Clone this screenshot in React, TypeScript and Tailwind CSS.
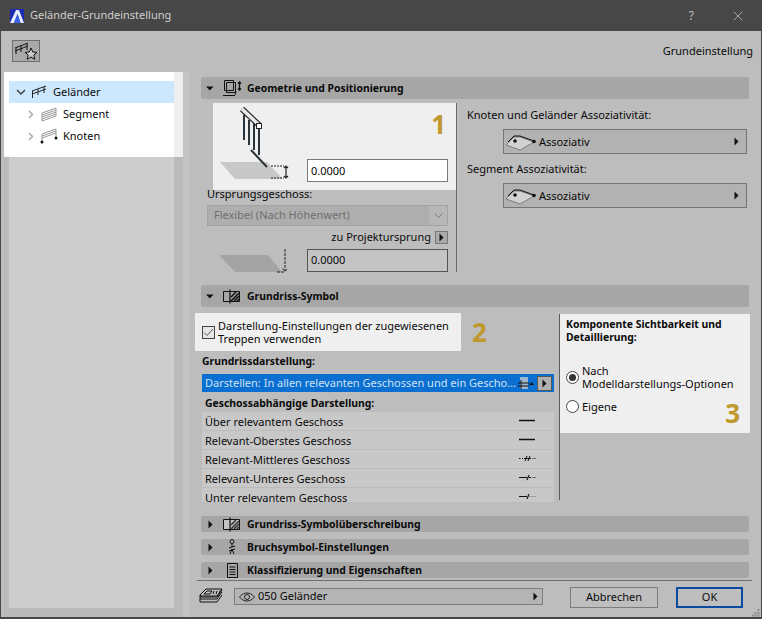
import type { ReactNode } from 'react'
import { X } from 'lucide-react'

const listRows = [
  { label: 'Über relevantem Geschoss', line: 'solid' },
  { label: 'Relevant-Oberstes Geschoss', line: 'solid' },
  { label: 'Relevant-Mittleres Geschoss', line: 'mid' },
  { label: 'Relevant-Unteres Geschoss', line: 'low' },
  { label: 'Unter relevantem Geschoss', line: 'under' },
]

function Caret({ open }: { open?: boolean }) {
  return open ? (
    <svg width="8" height="5" viewBox="0 0 8 5"><path d="M0 .5h7.500L3.750 4.500z" fill="#111" /></svg>
  ) : (
    <svg width="5" height="9" viewBox="0 0 5 9"><path d="M.5.5v8l4-4z" fill="#111" /></svg>
  )
}

function SectionHeader({ open, title, icon, tall }: { open?: boolean; title: string; icon: ReactNode; tall?: boolean }) {
  return (
    <div className={`flex items-center rounded-[3px] bg-[#a6a6a6] pl-[4px] ${tall ? 'h-[22px]' : 'h-[16px]'}`}>
      <div className="flex w-[10px] justify-center"><Caret open={open} /></div>
      <div className="ml-[2px] flex w-[30px] justify-center">{icon}</div>
      <span className="pt-[2px] text-[10.4px] font-bold text-[#0a0a0a]">{title}</span>
    </div>
  )
}

function HatchIcon({ open }: { open?: boolean }) {
  return (
    <svg width="18" height="15" viewBox="0 0 18 15" fill="none" stroke="#111">
      <path d="M.5 2.500h16v10H.5z" fill={open ? 'none' : '#c4c4c4'} />
      <path d="M7 .5v14" strokeWidth="1.300" />
      <path d="M8 12 16 4M11 12l5-5M8 8l5-5M14 12l2-2" strokeWidth="1.600" stroke={open ? '#111' : '#333'} />
    </svg>
  )
}

function AssocSelect() {
  return (
    <div className="ml-[36px] flex h-[25px] w-[244px] items-center border border-[#757575] bg-[#b2b2b2] pr-[7px] text-[11px] text-[#0a0a0a]">
      <svg className="ml-px" width="32" height="18" viewBox="0 0 32 18" fill="none">
        <path d="M1 12 9 4h6l14 5-14 8z" fill="#d2d2d2" stroke="#7d7d7d" />
        <path d="M3 9 9 3h6l14 5" stroke="#111" />
        <circle cx="10" cy="8" r="1.800" fill="#111" />
        <circle cx="29" cy="8.500" r="1.800" fill="#111" />
      </svg>
      <span className="ml-[2px] flex-1 pt-[2px]">Assoziativ</span>
      <Caret />
    </div>
  )
}

function LineSample({ kind }: { kind: string }) {
  const stroke = '#111'
  return (
    <svg width="17" height="7" viewBox="0 0 17 7" fill="none">
      {kind === 'solid' && <path d="M0 3.500h16" stroke={stroke} strokeWidth="1.500" />}
      {kind === 'mid' && <path d="M0 3.500h1.500M3 3.500h1M5 3.500h7M13.500 3.500h1M15.500 3.500h1M6 6l2-5M9 6l2-5" stroke={stroke} />}
      {kind === 'low' && <path d="M0 3.500h8M10 3.500h2M13.500 3.500h1M15.500 3.500h1M8 6l2-5" stroke={stroke} strokeWidth="1.100" />}
      {kind === 'under' && (
        <>
          <path d="M0 3.500h8M8 6l2-5" stroke={stroke} strokeWidth="1.100" />
          <path d="M10 3.500h7" stroke="#9a9a9a" />
        </>
      )}
    </svg>
  )
}

export default function App() {
  return (
    <div className="flex h-[619px] w-[762px] flex-col overflow-hidden bg-[#474747] font-['Noto_Sans','Open_Sans',sans-serif]">
      {/* title bar */}
      <div className="flex h-[31px] shrink-0 items-center text-[#cfcfcf]">
        <svg className="ml-[10px]" width="14" height="14" viewBox="0 0 14 14">
          <rect width="14" height="14" fill="#1a2bb0" />
          <path d="M0 14 6 1h3l5 13H10.500L7.500 5 4 14z" fill="#e4ecff" />
          <path d="M4 14 7.500 5l3 9z" fill="#3a62e6" />
        </svg>
        <span className="ml-[6px] text-[11px]">Geländer-Grundeinstellung</span>
        <span className="ml-auto mr-[36px] text-[12px] text-[#bdbdbd]">?</span>
        <X className="mr-[16px]" size={16} strokeWidth={1} color="#d8d8d8" />
      </div>

      <div className="relative mx-px mb-[2px] flex flex-1 flex-col bg-[#bdbdbd]">
        {/* toolbar */}
        <div className="flex h-[41px] shrink-0 items-start justify-between pl-[11px] pr-[8px] pt-[9px]">
          <div className="flex h-[22px] w-[28px] items-center justify-center border border-[#6e6e6e] bg-[#a9a9a9]">
            <svg width="24" height="20" viewBox="0 0 24 20" fill="none" stroke="#111">
              <path d="M1 7 14 2M1 10 14 5M2 7v6M7 5v6M13 3v6" />
              <path d="m17 7 1.800 4 4.200.4-3.200 2.700 1 4.200-3.800-2.300-3.800 2.300 1-4.200-3.200-2.700 4.200-.4z" fill="#c9c9c9" />
            </svg>
          </div>
          <span className="text-[11px] leading-[22px] text-[#0a0a0a]">Grundeinstellung</span>
        </div>

        <div className="flex min-h-0 flex-1">
          {/* tree */}
          <div className="ml-[3px] flex w-[179px] shrink-0 flex-col bg-[#bababa]">
            <div className="h-[85px] bg-[#efefef] pr-[9px]">
              <div className="h-[85px] bg-white pt-[9px] text-[11px] text-[#0a0a0a]">
                <div className="ml-[5px] flex h-[22px] items-center bg-[#cce8ff] pl-[7px]">
                  <svg width="10" height="7" viewBox="0 0 10 7" fill="none" stroke="#444" strokeWidth="1.500"><path d="m1 1 4 4 4-4" /></svg>
                  <svg className="ml-[5px]" width="16" height="14" viewBox="0 0 16 14" fill="none" stroke="#222">
                    <path d="M1 6 15 1M1 9l14-5M1.500 6v7M7 4v6M13 2v6" />
                  </svg>
                  <span className="ml-[6px]">Geländer</span>
                </div>
                <div className="flex h-[22px] items-center pl-[24px]">
                  <svg width="6" height="9" viewBox="0 0 6 9" fill="none" stroke="#aaa" strokeWidth="1.500"><path d="m1 1 3.500 3.500L1 8" /></svg>
                  <svg className="ml-[7px]" width="16" height="15" viewBox="0 0 16 15" fill="none" stroke="#999">
                    <path d="M1 6 15 1v8L1 14zM1 8l14-5M1 10l14-5M1 12l14-5" />
                  </svg>
                  <span className="ml-[6px]">Segment</span>
                </div>
                <div className="flex h-[22px] items-center pl-[24px]">
                  <svg width="6" height="9" viewBox="0 0 6 9" fill="none" stroke="#aaa" strokeWidth="1.500"><path d="m1 1 3.500 3.500L1 8" /></svg>
                  <svg className="ml-[6px]" width="18" height="16" viewBox="0 0 18 16" fill="none" stroke="#999">
                    <path d="M2 6 16 1M2 8l14-5M2 10l14-5M2 6v8M16 1v9" />
                    <circle cx="2" cy="14" r="1.500" fill="#111" stroke="none" />
                    <circle cx="16" cy="10" r="1.500" fill="#111" stroke="none" />
                  </svg>
                  <span className="ml-[5px]">Knoten</span>
                </div>
              </div>
            </div>
            <div className="mb-[9px] ml-[5px] w-[165px] flex-1 bg-[#cdcdcd]" />
          </div>
          <div className="w-[6px] shrink-0 bg-[#c3c3c3]" />

          {/* settings column */}
          <div className="ml-[12px] flex w-[551px] flex-col">
            <div className="mt-[5px] w-[548px]">
              <SectionHeader
                open
                tall
                title="Geometrie und Positionierung"
                icon={
                  <svg width="20" height="18" viewBox="0 0 20 18" fill="none" stroke="#111">
                    <path d="M2.500 1.500h9v10h-9zM4.500 3.500h9v10h-9zM1 16.500h12M14 12l-1 4" />
                    <path d="M17.500 3v8M16 4.500 17.500 3 19 4.500M16 9.500l1.500 1.500L19 9.500" strokeWidth="1.300" />
                  </svg>
                }
              />
            </div>

            {/* geometrie */}
            <div className="flex h-[172px]">
              <div className="ml-[12px] mt-[4px] flex h-[169px] w-[244px] flex-col border-r border-[#6a6a6a]">
                <div className="relative flex h-[87px] w-[243px] shrink-0 bg-[#efefef]">
                  <svg className="shrink-0" width="94" height="87" viewBox="0 0 94 87" fill="none">
                    <path d="M7 59h47l16 17H22z" fill="#c8c8c8" />
                    <path d="M29 6l17 16" stroke="#333" strokeWidth="6" />
                    <path d="M29 6l17 16" stroke="#ececec" strokeWidth="3.500" />
                    <path d="M31 12v25M36 17v25M41 20v27M46 25v27M38 47l16 17" stroke="#29343a" strokeWidth="2" />
                    <rect x="43.500" y="20.500" width="5" height="5" fill="#fff" stroke="#222" />
                    <path d="M58 63h13M58 75h13" stroke="#222" strokeDasharray="2 1" />
                    <path d="M73 63v12M71 65l2-2 2 2M71 73l2 2 2-2" stroke="#222" strokeWidth="1.200" />
                  </svg>
                  <div className="mt-[56px] flex h-[23px] w-[141px] items-center border border-[#7a7a7a] bg-white pl-[3px] pt-px text-[11px] text-[#0a0a0a]">0.0000</div>
                  <span className="absolute right-[10px] top-[4px] font-['Open_Sans',sans-serif] text-[26px] leading-[34px] font-bold text-[#c0982c]">1</span>
                </div>
                <div className="-mt-[4px] -ml-[6px] text-[11px] leading-[15px] text-[#0a0a0a]">Ursprungsgeschoss:</div>
                <div className="mt-[4px] -ml-[6px] flex h-[21px] w-[241px] shrink-0 items-center border border-[#a3a3a3] bg-[#aeaeae] pl-[6px] text-[11px] text-[#6f6f6f]">
                  <span className="flex-1">Flexibel (Nach Höhenwert)</span>
                  <div className="flex h-full w-[18px] items-center justify-center bg-[#b7b7b7]">
                    <svg width="9" height="5" viewBox="0 0 9 5" fill="none" stroke="#777"><path d="m.5.500 4 4 4-4" /></svg>
                  </div>
                </div>
                <div className="mt-[2px] flex h-[18px] shrink-0 items-center justify-end pr-[8px] text-[11px] text-[#0a0a0a]">
                  <span>zu Projektursprung</span>
                  <div className="ml-[4px] flex h-[13px] w-[13px] items-center justify-center border border-[#777] bg-[#a9a9a9]"><Caret /></div>
                </div>
                <div className="mt-[3px] flex items-start">
                  <svg className="shrink-0" width="94" height="24" viewBox="0 0 94 24" fill="none">
                    <path d="M6 6h49l14 17H22z" fill="#a4a4a4" />
                    <path d="M72 0v22M69.500 19.500l2.500 3 2.500-3M64 23h7" stroke="#222" strokeDasharray="3 1" />
                  </svg>
                  <div className="flex h-[23px] w-[141px] items-center border border-[#555] bg-[#c4c4c4] pl-[3px] text-[11px] text-[#0a0a0a]">0.0000</div>
                </div>
              </div>
              <div className="ml-[10px] pt-[8px] text-[11px] text-[#0a0a0a]">
                <div className="h-[22px] leading-[15px]">Knoten und Geländer Assoziativität:</div>
                <AssocSelect />
                <div className="mt-[7px] h-[22px] leading-[15px]">Segment Assoziativität:</div>
                <AssocSelect />
              </div>
            </div>

            {/* grundriss */}
            <div className="mt-[14px] w-[548px]">
              <SectionHeader open tall title="Grundriss-Symbol" icon={<HatchIcon open />} />
            </div>
            <div className="flex h-[209px] text-[11px] text-[#0a0a0a]">
              <div className="w-[358px]">
                <div className="flex items-start">
                  <div className="-ml-[6px] mt-[6px] flex h-[38px] w-[266px] items-center bg-[#efefef] pl-[7px]">
                    <div className="flex h-[13px] w-[13px] shrink-0 items-center justify-center border border-[#444] bg-[#e6e6e6]">
                      <svg width="11" height="9" viewBox="0 0 11 9" fill="none" stroke="#555"><path d="m1 4.500 3 3L10 1" /></svg>
                    </div>
                    <span className="ml-[3px] leading-[13px]">Darstellung-Einstellungen der zugewiesenen Treppen verwenden</span>
                  </div>
                  <span className="ml-[11px] mt-[8px] font-['Open_Sans',sans-serif] text-[26px] leading-[34px] font-bold text-[#c0982c]">2</span>
                </div>
                <div className="ml-[1px] mt-[3px] h-[15px] text-[10.4px] font-bold leading-[15px]">Grundrissdarstellung:</div>
                <div className="ml-[1px] mt-[5px] flex h-[18px] w-[352px] items-center bg-[#0a6fd0] pl-[3px] pr-[2px] text-[#cfe2f5]">
                  <span className="flex-1 truncate">Darstellen: In allen relevanten Geschossen und ein Gescho...</span>
                  <svg className="ml-[2px]" width="18" height="14" viewBox="0 0 18 14" fill="none">
                    <rect x="2" y="1" width="8" height="12" fill="#9fb6cf" />
                    <path d="M0 7h11M0 10h11M3 4v9" stroke="#111" />
                    <path d="M11 9h5l-2.500-3z" fill="#111" />
                  </svg>
                  <div className="ml-px flex h-[15px] w-[15px] items-center justify-center border border-[#555] bg-[#b0b0b0]"><Caret /></div>
                </div>
                <div className="ml-[4px] mt-[4px] h-[15px] text-[10.4px] font-bold leading-[15px]">Geschossabhängige Darstellung:</div>
                <div className="ml-[1px] mt-[1px] w-[352px]">
                  {listRows.map((row, i) => (
                    <div key={row.label} className={`flex items-start justify-between bg-[#c8c8c8] pl-[3px] pr-[18px] leading-[20px] ${i === 4 ? 'h-[14px]' : 'h-[19px] border-b border-[#bbbbbb]'}`}>
                      <span>{row.label}</span>
                      <div className="pt-[5px]"><LineSample kind={row.line} /></div>
                    </div>
                  ))}
                </div>
              </div>
              <div className="mt-[7px] h-[186px] border-l border-[#5a5a5a]">
                <div className="relative h-[119px] w-[190px] bg-[#efefef] pl-[5px] pt-[4px]">
                  <div className="pl-px text-[10.4px] font-bold leading-[13px]">Komponente Sichtbarkeit und Detaillierung:</div>
                  <div className="mt-[20px] flex items-center pl-px">
                    <div className="flex h-[13px] w-[13px] shrink-0 items-center justify-center rounded-full border border-[#444] bg-white">
                      <div className="h-[7px] w-[7px] rounded-full bg-[#333]" />
                    </div>
                    <span className="ml-[3px] whitespace-pre leading-[13px]">{'Nach\nModelldarstellungs-Optionen'}</span>
                  </div>
                  <div className="mt-[10px] flex items-center pl-px">
                    <div className="h-[13px] w-[13px] rounded-full border border-[#444] bg-white" />
                    <span className="ml-[3px] leading-[13px]">Eigene</span>
                  </div>
                  <span className="absolute bottom-[3px] right-[10px] font-['Open_Sans',sans-serif] text-[26px] leading-[34px] font-bold text-[#c0982c]">3</span>
                </div>
              </div>
            </div>

            {/* collapsed sections */}
            <div className="flex w-[548px] flex-col gap-[7px]">
              <SectionHeader title="Grundriss-Symbolüberschreibung" icon={<HatchIcon />} />
              <SectionHeader
                title="Bruchsymbol-Einstellungen"
                icon={
                  <svg width="10" height="16" viewBox="0 0 10 16" fill="none" stroke="#111">
                    <circle cx="5" cy="2.500" r="2" />
                    <path d="M2 9l6-2M2 12l6-2M5 5v3M3 15l2-5M7 15l-2-5" />
                  </svg>
                }
              />
              <SectionHeader
                title="Klassifizierung und Eigenschaften"
                icon={
                  <svg width="11" height="15" viewBox="0 0 11 15" fill="none" stroke="#111">
                    <path d="M.5.500h10v14H.5zM2.500 4h6M2.500 6.500h6M2.500 9h6M2.500 11.500h6" />
                  </svg>
                }
              />
            </div>

            {/* footer */}
            <div className="-ml-[4px] mt-[2px] h-px w-[555px] bg-[#6f6f6f]" />
            <div className="-ml-[2px] mt-[6px] flex items-start text-[11px] text-[#0a0a0a]">
              <svg className="mt-[1px] shrink-0" width="24" height="15" viewBox="0 0 24 15" fill="none" stroke="#111">
                <path d="M1 7 7 1h16l-5 7H2zM5 6l3-3h5l-2 3zM14 6l1-3M17 6l1-3M20 6l1-3" />
                <path d="M1 7v2h17l5-7M1 9v2h17l5-7M1 11v3h17l5-7" />
              </svg>
              <div className="ml-[11px] mt-[1px] flex h-[17px] w-[309px] items-center border border-[#7c7c7c] bg-[#b4b4b4] pl-[4px] pr-[4px]">
                <svg width="16" height="10" viewBox="0 0 16 10" fill="none" stroke="#222">
                  <path d="M.5 5C3 2 5.500 1 8 1s5 1 7.500 4C13 8 10.500 9 8 9S3 8 .5 5z" />
                  <circle cx="8" cy="5" r="2.500" />
                </svg>
                <span className="ml-[3px] flex-1">050 Geländer</span>
                <Caret />
              </div>
              <div className="ml-[27px] flex h-[21px] w-[88px] items-center justify-center border border-[#7c7c7c] bg-[#bebebe]">Abbrechen</div>
              <div className="ml-[18px] flex h-[21px] w-[67px] items-center justify-center border-2 border-[#0a4ba0] bg-[#bebebe]">OK</div>
            </div>
          </div>
        </div>

        {/* resize grip */}
        <svg className="absolute bottom-0 right-[1px]" width="8" height="8" viewBox="0 0 8 8" fill="#8a8a8a">
          <path d="M5.500 0h2v2h-2zM2.500 3h2v2h-2zM5.500 3h2v2h-2zM0 5.500h2v2H0zM2.500 5.500h2v2h-2zM5.500 5.500h2v2h-2z" />
        </svg>
      </div>
    </div>
  )
}
